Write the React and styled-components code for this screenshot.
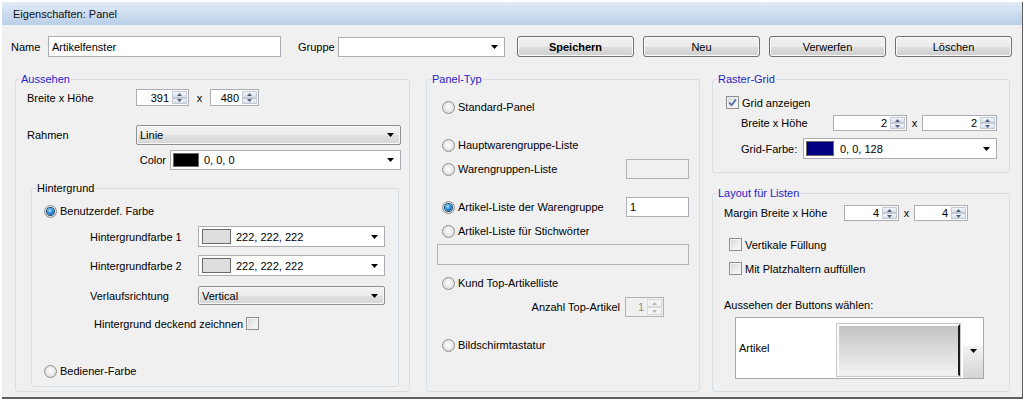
import React from 'react';
import styled, { createGlobalStyle } from 'styled-components';

const Global = createGlobalStyle`
  html, body { margin: 0; padding: 0; background: #ffffff; }
  body { font-family: "Liberation Sans", Arial, sans-serif; font-size: 11px; color: #000; }
  * { box-sizing: border-box; }
`;

const Window = styled.div`
  margin: 2px 0 0 2px;
  width: 1021px;
  height: 397px;
  background: #f0f0f0;
  border-right: 1px solid #5f5f5f;
  border-bottom: 2px solid #5f5f5f;
  display: flex;
  flex-direction: column;
`;

const TitleBar = styled.div`
  height: 23px;
  padding-left: 11px;
  display: flex;
  align-items: center;
  background: linear-gradient(#e2ebf6, #b9cfe9);
  color: #111;
  flex-shrink: 0;
`;

const Content = styled.div`
  padding: 11px 0 0 9px;
  display: flex;
  flex-direction: column;
`;

const TopRow = styled.div`
  display: flex;
  align-items: center;
  height: 21px;
`;

const Label = styled.span`
  width: ${(p) => p.$w}px;
  flex-shrink: 0;
  text-align: ${(p) => p.$align || 'left'};
  padding-right: ${(p) => p.$pr || 0}px;
  margin-left: ${(p) => p.$ml || 0}px;
  white-space: nowrap;
`;

const TextBox = styled.div`
  width: ${(p) => p.$w}px;
  height: ${(p) => p.$h}px;
  flex-shrink: 0;
  border: 1px solid ${(p) => (p.$disabled ? '#b3b3b3' : '#abadb3')};
  background: ${(p) => (p.$disabled ? '#f0f0f0' : '#fff')};
  padding-left: 3px;
  display: flex;
  align-items: center;
  margin-left: ${(p) => p.$ml || 0}px;
`;

const Combo = styled.div`
  width: ${(p) => p.$w}px;
  height: ${(p) => p.$h}px;
  flex-shrink: 0;
  border: 1px solid #abadb3;
  background: #fff;
  display: flex;
  align-items: center;
  padding-left: ${(p) => (p.$swatch ? 0 : 3)}px;
  margin-left: ${(p) => p.$ml || 0}px;
`;

const DropList = styled.div`
  width: ${(p) => p.$w}px;
  height: ${(p) => p.$h}px;
  flex-shrink: 0;
  border: 1px solid #8f8f8f;
  border-radius: 2px;
  background: linear-gradient(#f3f3f3 0%, #ececec 50%, #e0e0e0 51%, #d6d6d6 100%);
  box-shadow: inset 0 0 0 1px #f8f8f8;
  display: flex;
  align-items: center;
  padding-left: 3px;
`;

const ArrowSlot = styled.span`
  width: 19px;
  margin-left: auto;
  display: flex;
  justify-content: center;
  align-items: center;
  flex-shrink: 0;
`;

const Swatch = styled.span`
  width: ${(p) => p.$w}px;
  align-self: stretch;
  margin: 2px ${(p) => p.$gap}px 2px ${(p) => p.$inset}px;
  border: 1px solid #6a6a6a;
  background: ${(p) => p.$color};
  flex-shrink: 0;
`;

const Button = styled.button`
  width: 117px;
  height: 21px;
  margin-left: ${(p) => p.$ml}px;
  padding: 0;
  border: 1px solid #707070;
  border-radius: 3px;
  background: linear-gradient(#f2f2f2 0%, #ebebeb 50%, #dddddd 51%, #cfcfcf 100%);
  box-shadow: inset 0 0 0 1px #fbfbfb;
  font-family: inherit;
  font-size: 11px;
  font-weight: ${(p) => (p.$bold ? 'bold' : 'normal')};
  color: #000;
  flex-shrink: 0;
`;

const Groups = styled.div`
  display: flex;
  margin: 15px 0 0 4px;
`;

const Column = styled.div`
  display: flex;
  flex-direction: column;
  gap: 13px;
  margin-left: ${(p) => p.$ml || 0}px;
`;

const GroupBox = styled.fieldset`
  margin: ${(p) => p.$mt || 0}px 0 0 ${(p) => p.$ml || 0}px;
  padding: 0;
  min-width: 0;
  width: ${(p) => p.$w}px;
  height: ${(p) => p.$h}px;
  border: 1px solid #d5dfe5;
  border-radius: 3px;
  flex-shrink: 0;
`;

const Legend = styled.legend`
  margin-left: 4px;
  padding: 0 1px;
  line-height: 14px;
  font-size: 11px;
  color: ${(p) => p.$color || '#1f1fc4'};
`;

const Body = styled.div`
  display: flex;
  flex-direction: column;
`;

const FieldRow = styled.div`
  display: flex;
  align-items: center;
  flex-shrink: 0;
  height: ${(p) => p.$h}px;
  margin-top: ${(p) => p.$mt || 0}px;
  padding-left: ${(p) => p.$pl || 0}px;
  padding-right: ${(p) => p.$pr || 0}px;
  justify-content: ${(p) => p.$justify || 'flex-start'};
`;

const Option = styled.span`
  display: flex;
  align-items: center;
  gap: 3px;
  white-space: nowrap;
`;

const RadioDot = styled.span`
  width: 13px;
  height: 13px;
  border-radius: 50%;
  border: 1px solid #8c8e90;
  background: radial-gradient(circle at 50% 45%, #ffffff 0%, #ececec 45%, #cfd0d1 100%);
  display: inline-grid;
  place-items: center;
  flex-shrink: 0;
  &::after {
    content: '';
    width: 7px;
    height: 7px;
    border-radius: 50%;
    display: ${(p) => (p.$checked ? 'block' : 'none')};
    background: radial-gradient(circle at 40% 35%, #a8e2ff 0%, #2c90d6 45%, #0b4b86 100%);
    box-shadow: 0 0 0 1px #24486e;
  }
`;

const CheckBox = styled.span`
  width: 13px;
  height: 13px;
  border: 1px solid #8e8f8f;
  background: linear-gradient(135deg, #d6d6d6 0%, #eeeeee 60%, #fbfbfb 100%);
  box-shadow: inset 0 0 0 1px #f2f2f2;
  display: inline-grid;
  place-items: center;
  flex-shrink: 0;
`;

const SpinBox = styled.div`
  width: ${(p) => p.$w}px;
  height: ${(p) => p.$h}px;
  flex-shrink: 0;
  border: 1px solid ${(p) => (p.$disabled ? '#b3b3b3' : '#abadb3')};
  background: ${(p) => (p.$disabled ? '#f0f0f0' : '#fff')};
  display: flex;
`;

const SpinValue = styled.span`
  flex: 1;
  text-align: right;
  padding-right: 2px;
  align-self: center;
  color: ${(p) => (p.$disabled ? '#8d8d8d' : '#000')};
`;

const SpinButtons = styled.span`
  width: 15px;
  display: flex;
  flex-direction: column;
  margin: 1px;
`;

const SpinBtn = styled.span`
  flex: 1;
  display: flex;
  align-items: center;
  justify-content: center;
  border: 1px solid ${(p) => (p.$disabled ? '#dadada' : '#c3cad6')};
  background: ${(p) =>
    p.$disabled ? '#f4f4f4' : 'linear-gradient(#f4f6f9, #d8dee8)'};
`;

const XSep = styled.span`
  width: ${(p) => p.$w}px;
  text-align: center;
  flex-shrink: 0;
`;

const Picker = styled.div`
  margin: 5px 0 0 22px;
  width: 249px;
  height: 62px;
  border: 1px solid #a9a9a9;
  background: #fff;
  display: flex;
  flex-shrink: 0;
`;

const PickerLabel = styled.span`
  width: 101px;
  padding-left: 3px;
  align-self: center;
  flex-shrink: 0;
`;

const PreviewTile = styled.div`
  width: 123px;
  height: 52px;
  margin-top: 6px;
  flex-shrink: 0;
  border-top: 2px solid #fafafa;
  border-left: 2px solid #fafafa;
  border-right: 2px solid #1e1e1e;
  border-bottom: 1px solid #eeeeee;
  outline: 1px solid #c8c8c8;
  background: linear-gradient(#c3c3c3, #f3f3f3);
`;

const PickerArrow = styled.div`
  width: 20px;
  height: 32px;
  margin-left: 3px;
  align-self: flex-end;
  background: linear-gradient(#f2f2f2, #d4d4d4);
  display: flex;
  justify-content: center;
  padding-top: 3px;
`;

const DownArrow = ({ color = '#000' }) => (
  <svg width="7" height="4" viewBox="0 0 7 4">
    <polygon points="0,0 7,0 3.5,4" fill={color} />
  </svg>
);

const Spin = ({ value, w, h, disabled }) => {
  const c = disabled ? '#b5b5b5' : '#4c6180';
  return (
    <SpinBox $w={w} $h={h} $disabled={disabled}>
      <SpinValue $disabled={disabled}>{value}</SpinValue>
      <SpinButtons>
        <SpinBtn $disabled={disabled}>
          <svg width="5" height="3" viewBox="0 0 5 3"><polygon points="0,3 5,3 2.5,0" fill={c} /></svg>
        </SpinBtn>
        <SpinBtn $disabled={disabled}>
          <svg width="5" height="3" viewBox="0 0 5 3"><polygon points="0,0 5,0 2.5,3" fill={c} /></svg>
        </SpinBtn>
      </SpinButtons>
    </SpinBox>
  );
};

const Radio = ({ checked, children }) => (
  <Option>
    <RadioDot $checked={checked} />
    {children}
  </Option>
);

const Check = ({ checked, children }) => (
  <Option>
    <CheckBox>
      {checked && (
        <svg width="9" height="9" viewBox="0 0 9 9">
          <path d="M1.2 4.6 L3.6 7.2 L8 1.4" stroke="#5670ad" strokeWidth="1.8" fill="none" />
        </svg>
      )}
    </CheckBox>
    {children}
  </Option>
);

const ColorCombo = ({ w, h, color, sw, inset, gap, text }) => (
  <Combo $w={w} $h={h} $swatch>
    <Swatch $w={sw} $color={color} $inset={inset} $gap={gap} />
    {text}
    <ArrowSlot><DownArrow /></ArrowSlot>
  </Combo>
);

export default function App() {
  return (
    <>
      <Global />
      <Window>
        <TitleBar>Eigenschaften: Panel</TitleBar>
        <Content>
          <TopRow>
            <Label $w={37}>Name</Label>
            <TextBox $w={233} $h={21}>Artikelfenster</TextBox>
            <Label $w={40} $ml={17}>Gruppe</Label>
            <Combo $w={167} $h={20}>
              <ArrowSlot><DownArrow /></ArrowSlot>
            </Combo>
            <Button $ml={12} $bold>Speichern</Button>
            <Button $ml={9}>Neu</Button>
            <Button $ml={9}>Verwerfen</Button>
            <Button $ml={9}>Löschen</Button>
          </TopRow>

          <Groups>
            <GroupBox $w={395} $h={320}>
              <Legend>Aussehen</Legend>
              <Body>
                <FieldRow $h={17} $mt={3} $pl={11}>
                  <Label $w={109}>Breite x Höhe</Label>
                  <Spin value="391" w={53} h={17} />
                  <XSep $w={21}>x</XSep>
                  <Spin value="480" w={49} h={17} />
                </FieldRow>
                <FieldRow $h={20} $mt={19} $pl={11}>
                  <Label $w={109}>Rahmen</Label>
                  <DropList $w={265} $h={20}>
                    Linie
                    <ArrowSlot><DownArrow /></ArrowSlot>
                  </DropList>
                </FieldRow>
                <FieldRow $h={20} $mt={5} $pl={11}>
                  <Label $w={143} $align="right" $pr={4}>Color</Label>
                  <ColorCombo w={231} h={20} color="#000" sw={26} inset={2} gap={5} text="0, 0, 0" />
                </FieldRow>

                <GroupBox $w={368} $h={206} $mt={11} $ml={15}>
                  <Legend $color="#000">Hintergrund</Legend>
                  <Body>
                    <FieldRow $h={14} $mt={9} $pl={12}>
                      <Radio checked>Benutzerdef. Farbe</Radio>
                    </FieldRow>
                    <FieldRow $h={21} $mt={8} $pl={58}>
                      <Label $w={108}>Hintergrundfarbe 1</Label>
                      <ColorCombo w={187} h={21} color="#dedede" sw={29} inset={3} gap={5} text="222, 222, 222" />
                    </FieldRow>
                    <FieldRow $h={21} $mt={8} $pl={58}>
                      <Label $w={108}>Hintergrundfarbe 2</Label>
                      <ColorCombo w={187} h={21} color="#dedede" sw={29} inset={3} gap={5} text="222, 222, 222" />
                    </FieldRow>
                    <FieldRow $h={19} $mt={10} $pl={58}>
                      <Label $w={108}>Verlaufsrichtung</Label>
                      <DropList $w={187} $h={19}>
                        Vertical
                        <ArrowSlot><DownArrow /></ArrowSlot>
                      </DropList>
                    </FieldRow>
                    <FieldRow $h={13} $mt={12} $pl={62}>
                      <Option>
                        Hintergrund deckend zeichnen
                        <CheckBox />
                      </Option>
                    </FieldRow>
                    <FieldRow $h={14} $mt={34} $pl={12}>
                      <Radio>Bediener-Farbe</Radio>
                    </FieldRow>
                  </Body>
                </GroupBox>
              </Body>
            </GroupBox>

            <GroupBox $w={274} $h={320} $ml={16}>
              <Legend>Panel-Typ</Legend>
              <Body>
                <FieldRow $h={14} $mt={14} $pl={15}>
                  <Radio>Standard-Panel</Radio>
                </FieldRow>
                <FieldRow $h={14} $mt={24} $pl={15}>
                  <Radio>Hauptwarengruppe-Liste</Radio>
                </FieldRow>
                <FieldRow $h={20} $mt={7} $pl={15} $pr={10} $justify="space-between">
                  <Radio>Warengruppen-Liste</Radio>
                  <TextBox $w={63} $h={20} $disabled />
                </FieldRow>
                <FieldRow $h={20} $mt={18} $pl={15} $pr={10} $justify="space-between">
                  <Radio checked>Artikel-Liste der Warengruppe</Radio>
                  <TextBox $w={63} $h={20}>1</TextBox>
                </FieldRow>
                <FieldRow $h={14} $mt={7} $pl={15}>
                  <Radio>Artikel-Liste für Stichwörter</Radio>
                </FieldRow>
                <FieldRow $h={21} $mt={6} $pl={10} $pr={10}>
                  <TextBox $w={252} $h={21} $disabled />
                </FieldRow>
                <FieldRow $h={14} $mt={11} $pl={15}>
                  <Radio>Kund Top-Artikelliste</Radio>
                </FieldRow>
                <FieldRow $h={20} $mt={7} $pr={35} $justify="flex-end">
                  <Label $pr={5}>Anzahl Top-Artikel</Label>
                  <Spin value="1" w={39} h={20} disabled />
                </FieldRow>
                <FieldRow $h={14} $mt={21} $pl={15}>
                  <Radio>Bildschirmtastatur</Radio>
                </FieldRow>
              </Body>
            </GroupBox>

            <Column $ml={12}>
              <GroupBox $w={298} $h={101}>
                <Legend>Raster-Grid</Legend>
                <Body>
                  <FieldRow $h={13} $mt={10} $pl={13}>
                    <Check checked>Grid anzeigen</Check>
                  </FieldRow>
                  <FieldRow $h={16} $mt={6} $pl={28}>
                    <Label $w={92}>Breite x Höhe</Label>
                    <Spin value="2" w={74} h={16} />
                    <XSep $w={15}>x</XSep>
                    <Spin value="2" w={75} h={16} />
                  </FieldRow>
                  <FieldRow $h={21} $mt={7} $pl={28}>
                    <Label $w={62}>Grid-Farbe:</Label>
                    <ColorCombo w={194} h={21} color="#000080" sw={28} inset={2} gap={6} text="0, 0, 128" />
                  </FieldRow>
                </Body>
              </GroupBox>

              <GroupBox $w={298} $h={206}>
                <Legend>Layout für Listen</Legend>
                <Body>
                  <FieldRow $h={16} $mt={5} $pl={11}>
                    <Label $w={120}>Margin Breite x Höhe</Label>
                    <Spin value="4" w={55} h={16} />
                    <XSep $w={15}>x</XSep>
                    <Spin value="4" w={54} h={16} />
                  </FieldRow>
                  <FieldRow $h={13} $mt={17} $pl={16}>
                    <Check>Vertikale Füllung</Check>
                  </FieldRow>
                  <FieldRow $h={13} $mt={11} $pl={16}>
                    <Check>Mit Platzhaltern auffüllen</Check>
                  </FieldRow>
                  <FieldRow $h={14} $mt={23} $pl={11}>
                    Aussehen der Buttons wählen:
                  </FieldRow>
                  <Picker>
                    <PickerLabel>Artikel</PickerLabel>
                    <PreviewTile />
                    <PickerArrow><DownArrow /></PickerArrow>
                  </Picker>
                </Body>
              </GroupBox>
            </Column>
          </Groups>
        </Content>
      </Window>
    </>
  );
}
